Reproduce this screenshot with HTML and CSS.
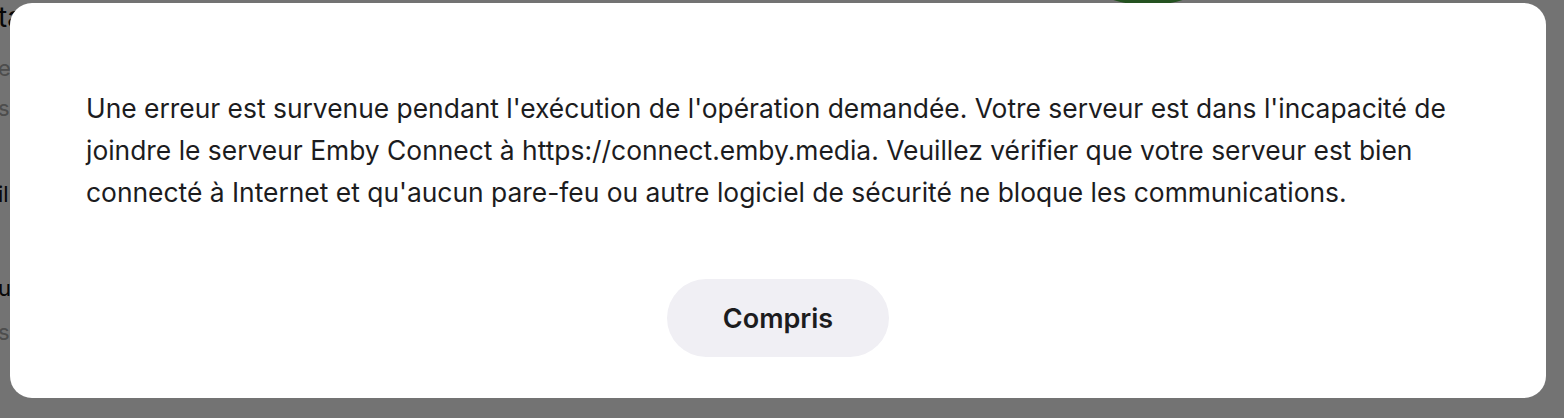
FILE: index.html
```html
<!DOCTYPE html>
<html lang="fr">
<head>
    <meta charset="UTF-8">
    <meta name="viewport" content="width=device-width, initial-scale=1.0">
    <title>Emby Connect</title>
    <link rel="stylesheet" href="styles.css">
</head>
<body>
    <div class="page">
        <div class="page-logo"></div>
        <div class="page-list">
            <div class="page-line dark first">ta</div>
            <div class="page-line light">es</div>
            <div class="page-line light">s</div>
            <div class="page-line dark">il</div>
            <div class="page-line dark">u</div>
            <div class="page-line light">s</div>
        </div>
    </div>

    <div class="backdrop"></div>

    <div class="dialog">
        <p class="dialog-text">Une erreur est survenue pendant l'exécution de l'opération demandée. Votre serveur est dans l'incapacité de joindre le serveur Emby Connect à https://connect.emby.media. Veuillez vérifier que votre serveur est bien connecté à Internet et qu'aucun pare-feu ou autre logiciel de sécurité ne bloque les communications.</p>
        <div class="dialog-buttons">
            <button class="btn">Compris</button>
        </div>
    </div>
</body>
</html>
```

FILE: styles.css
```css
body {
    margin: 0;
    height: 100vh;
    overflow: hidden;
    background-color: #ffffff;
    font-family: Inter, "Noto Sans", sans-serif;
    color: #1c1c1e;
}
.page {
    height: 100%;
}
.page-logo {
    position: absolute;
    left: 1025px;
    top: -241px;
    width: 246px;
    height: 246px;
    border-radius: 50%;
    background-color: #52b54b;
}
.page-list {
    margin-left: -2px;
}
.page-line {
    font-size: 22px;
    line-height: 30px;
}
.page-line.first {
    font-size: 28px;
    line-height: 34px;
}
.page-line.dark {
    color: #111;
}
.page-line.light {
    color: #aaa;
}
.page-line:nth-child(2) { margin-top: 19px; }
.page-line:nth-child(3) { margin-top: 10px; }
.page-line:nth-child(4) { margin-top: 56px; }
.page-line:nth-child(5) { margin-top: 64px; }
.page-line:nth-child(6) { margin-top: 14px; }

.backdrop {
    position: fixed;
    inset: 0;
    background-color: rgba(0, 0, 0, 0.55);
}
.dialog {
    position: fixed;
    top: 3px;
    left: 10px;
    right: 18px;
    box-sizing: border-box;
    padding: 84px 76px 41px;
    background-color: #ffffff;
    border-radius: 22px;
}
.dialog-text {
    margin: 0;
    font-size: 26.4px;
    line-height: 42px;
    color: #1c1c1e;
}
.dialog-buttons {
    display: flex;
    justify-content: center;
    margin-top: 66px;
}
.btn {
    width: 222px;
    height: 78px;
    border: none;
    border-radius: 39px;
    background-color: #f0eff4;
    font-family: Inter, "Noto Sans", sans-serif;
    font-size: 27px;
    font-weight: 600;
    color: #1c1c1e;
    cursor: pointer;
}
```
